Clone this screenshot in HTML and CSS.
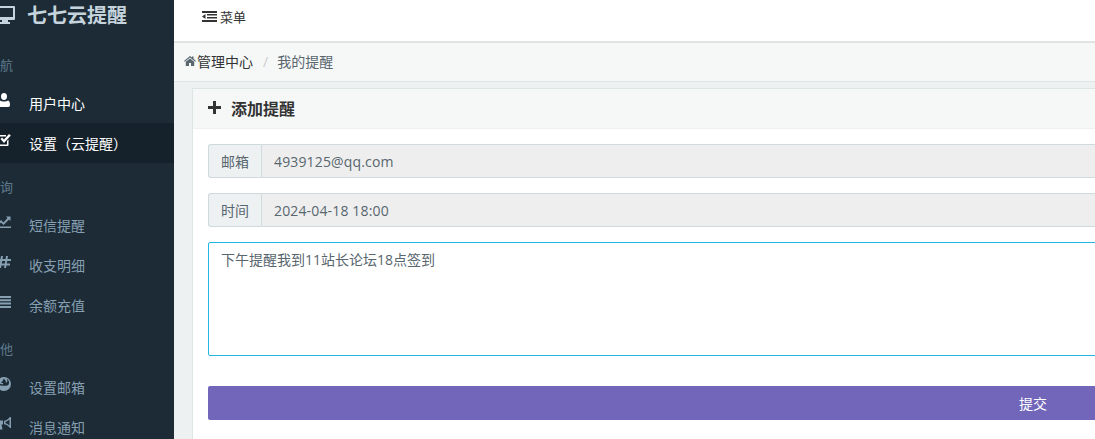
FILE: index.html
```html
<!DOCTYPE html>
<html lang="zh-CN">
  <head>
    <meta charset="UTF-8" />
    <title>我的提醒</title>
    <link rel="stylesheet" href="styles.css">
  </head>
  <body>
    <div class="app">
      <aside class="sidebar">
        <div class="brand">
          <svg class="brand-icon" viewBox="0 0 20 18"><path d="M1 0h18a1 1 0 0 1 1 1v12a1 1 0 0 1-1 1h-6v2h2v2H5v-2h2v-2H1a1 1 0 0 1-1-1V1a1 1 0 0 1 1-1zm1 2v9h16V2z" fill="#c5d3dc" fill-rule="evenodd"/></svg>
          <span>七七云提醒</span>
        </div>

        <div class="nav-label first">导航</div>
        <a class="nav-item light">
          <svg viewBox="0 0 14 14"><path d="M7 0c2 0 3 1.500 3 3.500S9 7 7 7 4 5.500 4 3.500 5 0 7 0zM3 7.500C4 8.300 5.500 8.500 7 8.500s3-.2 4-1c1.500.4 2 2 2 4.500 0 1-.6 2-1.700 2H2.700C1.600 14 1 13 1 12c0-2.500.5-4.100 2-4.500z"/></svg>
          <span>用户中心</span>
        </a>
        <a class="nav-item light active">
          <svg viewBox="0 0 14 14"><path d="M1.500 2H9v1.500H2v8h8V8l1.500-1.500v5.500c0 .6-.4 1-1 1h-9c-.6 0-1-.4-1-1V3c0-.6.4-1 1-1z"/><path d="M3.500 6 5 4.500 7 6.500 12 1l1.800 1.600L7 10z"/></svg>
          <span>设置（云提醒）</span>
        </a>

        <div class="nav-label">查询</div>
        <a class="nav-item">
          <svg viewBox="0 0 14 14"><path d="M0 11.500h14V13H0z"/><path d="M0 9l4-4 2.500 2.500L10.500 3 9 1.500h4.500V6L12 4.500 6.500 10 4 7.500 1 10.500z"/></svg>
          <span>短信提醒</span>
        </a>
        <a class="nav-item">
          <svg viewBox="0 0 14 14"><path d="M4 1h2L5.500 4h3L9 1h2l-.5 3H14v2h-3.800l-.4 2.500H13v2H9.500L9 13H7l.5-2.500h-3L4 13H2l.5-2.500H0v-2h2.800L3.200 6H1V4h2.500zM5.200 6l-.4 2.500h3L8.200 6z" fill-rule="evenodd"/></svg>
          <span>收支明细</span>
        </a>
        <a class="nav-item">
          <svg viewBox="0 0 14 14"><path d="M0 1h14v2H0zM0 4.300h14v2H0zM0 7.600h14v2H0zM0 10.900h14v2H0z"/></svg>
          <span>余额充值</span>
        </a>

        <div class="nav-label">其他</div>
        <a class="nav-item">
          <svg viewBox="0 0 14 14"><path d="M7 0a7 7 0 1 1 0 14A7 7 0 0 1 7 0zm0 1.500L5.500 4 4 6h2v1.500L3 6.800 1.500 6.500c.6 1.400 1.700 2 3.500 2.200h4c2 0 3.200-1.400 3-3.500-.2-1.600-1-2.800-2.200-3.400.6 1 .8 2 .4 3-.3.800-1 1-1.700.7V6h1.500z" fill-rule="evenodd"/></svg>
          <span>设置邮箱</span>
        </a>
        <a class="nav-item">
          <svg viewBox="0 0 14 14"><path d="M13 0h1v11h-1c-2-2.500-4-3.500-6-3.700V3.700C9 3.500 11 2.500 13 0zm-.5 2.500C11 3.800 9.800 4.500 8.500 4.800v1.400c1.300.3 2.500 1 4 2.300z" fill-rule="evenodd"/><path d="M0 3.500h6v4H4.500l1 5H3l-1-5H0z"/></svg>
          <span>消息通知</span>
        </a>
      </aside>

      <main class="main">
        <header class="topbar">
          <svg class="menu-icon" viewBox="0 0 15 11"><path d="M0 0h15v2H0zM5 3h10v1.500H5zM5 6h10v1.500H5zM0 9h15v2H0zM3.500 3v5L0 5.500z"/></svg>
          <span>菜单</span>
        </header>

        <nav class="breadcrumb">
          <svg class="home-icon" viewBox="0 0 12 10"><path d="M6 0l2 1.600V.6h1.500v2.200L12 5l-.7.8L6 1.500.7 5.800 0 5zM1.800 5.800 6 2.400l4.200 3.400V10H7V7H5v3H1.800z"/></svg>
          <span>管理中心</span>
          <span class="sep">/</span>
          <span class="current">我的提醒</span>
        </nav>

        <section class="panel">
          <div class="panel-head">
            <svg class="plus-icon" viewBox="0 0 13 13"><path d="M5 0h3v5h5v3H8v5H5V8H0V5h5z"/></svg>
            <span>添加提醒</span>
          </div>
          <form class="panel-body">
            <div class="input-group">
              <span class="addon">邮箱</span>
              <input class="field" type="text" value="4939125@qq.com" readonly />
            </div>
            <div class="input-group">
              <span class="addon">时间</span>
              <input class="field" type="text" value="2024-04-18 18:00" readonly />
            </div>
            <textarea class="note" readonly>下午提醒我到11站长论坛18点签到</textarea>
            <button class="submit-btn" type="button">提交</button>
          </form>
        </section>
      </main>
    </div>
  </body>
</html>
```

FILE: styles.css
```css
html,
body {
  margin: 0;
  height: 100%;
  overflow: hidden;
}

body {
  font-family: "Open Sans", "Noto Sans CJK SC", sans-serif;
  font-size: 14px;
  color: #58666e;
}

.app {
  display: flex;
  height: 439px;
  overflow: hidden;
}

/* sidebar: page is scrolled a bit, icons get cut on the left */
.sidebar {
  flex: 0 0 174px;
  width: 174px;
  height: 100%;
  overflow: hidden;
  background: #1c2b36;
  color: #869fb1;
}

.brand {
  display: flex;
  align-items: center;
  height: 30px;
  font-size: 20px;
  font-weight: 700;
  line-height: 30px;
  color: #c5d3dc;
}

.brand span {
  margin-top: 1px;
}

.brand-icon {
  flex: none;
  width: 20px;
  height: 18px;
  margin-left: -5px;
  margin-right: 12px;
}

.nav-label {
  display: flex;
  align-items: center;
  box-sizing: border-box;
  height: 42px;
  padding-top: 4px;
  margin-left: -13px;
  font-size: 13px;
  color: #5f7a8c;
}

.nav-label.first {
  height: 53px;
  padding-top: 15px;
}

.nav-item {
  display: flex;
  align-items: center;
  height: 40px;
  font-size: 14px;
  color: #869fb1;
}

.nav-item svg {
  flex: none;
  width: 14px;
  height: 14px;
  margin-left: -3px;
  margin-right: 18px;
  margin-bottom: 6px;
  fill: currentColor;
}

.nav-item.light {
  color: #fff;
}

.nav-item.active {
  background: #16222b;
}

.main {
  flex: 1;
  min-width: 0;
  overflow: hidden;
  background: #edf1f2;
}

.topbar {
  display: flex;
  align-items: center;
  height: 33px;
  padding-bottom: 8px;
  padding-left: 28px;
  background: #fff;
  border-bottom: 2px solid #dfe3e4;
  font-size: 13px;
  color: #333;
}

.menu-icon {
  width: 15px;
  height: 11px;
  margin-right: 3px;
  fill: #333;
}

.breadcrumb {
  display: flex;
  align-items: center;
  height: 36px;
  padding-bottom: 2px;
  padding-left: 10px;
  background: #f6f8f8;
  border-bottom: 1px solid #dee5e7;
  color: #333;
}

.home-icon {
  width: 12px;
  height: 10px;
  margin-right: 1px;
  fill: #58666e;
}

.sep {
  margin: 0 9px 0 10px;
  color: #ccc;
}

.current {
  color: #58666e;
}

.panel {
  width: 1680px;
  margin: 6px 0 0 18px;
  background: #fff;
  border: 1px solid #dee5e7;
  border-right: 0;
}

.panel-head {
  display: flex;
  align-items: center;
  height: 37px;
  padding-bottom: 2px;
  padding-left: 15px;
  background: #f6f8f8;
  border-bottom: 1px solid #edf1f2;
  font-size: 16px;
  font-weight: 700;
  color: #333;
}

.plus-icon {
  width: 13px;
  height: 13px;
  margin-right: 10px;
  fill: #333;
}

.panel-body {
  display: flex;
  flex-direction: column;
  width: 1650px;
  height: 320px;
  padding: 15px;
}

.input-group {
  display: flex;
  height: 34px;
  margin-bottom: 15px;
}

.addon {
  display: flex;
  flex: 0 0 53px;
  align-items: center;
  justify-content: center;
  box-sizing: border-box;
  background: #edf1f2;
  border: 1px solid #cfdadd;
  border-right: 0;
  border-radius: 3px 0 0 3px;
  font-size: 14px;
}

.field {
  flex: 1;
  min-width: 0;
  box-sizing: border-box;
  padding: 0 12px;
  background: #eee;
  border: 1px solid #cfdadd;
  border-radius: 0 3px 3px 0;
  outline: none;
  font: inherit;
  letter-spacing: 0.15px;
  color: #58666e;
}

.note {
  display: block;
  box-sizing: border-box;
  width: 100%;
  height: 114px;
  padding: 7px 12px 5px;
  background: #fff;
  border: 1px solid #23b7e5;
  border-radius: 2px;
  outline: none;
  resize: none;
  font: inherit;
  line-height: 20px;
  color: #58666e;
}

.submit-btn {
  display: block;
  width: 100%;
  height: 34px;
  margin-top: 30px;
  background: #7266ba;
  border: none;
  border-radius: 2px;
  font: inherit;
  color: #fff;
}
```
